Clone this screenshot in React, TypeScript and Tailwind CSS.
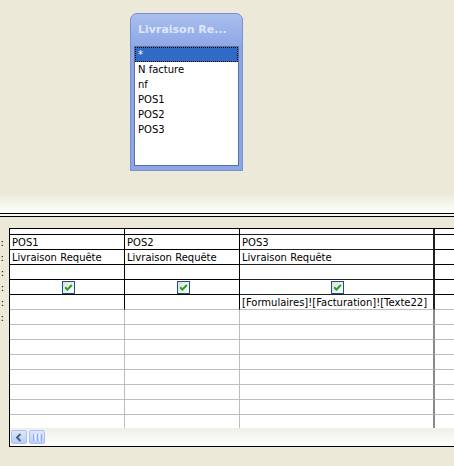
import React from "react";

const FONT = { fontFamily: '"DejaVu Sans", Verdana, sans-serif' };

function Check() {
  return (
    <svg width="13" height="13" viewBox="0 0 13 13">
      <defs>
        <linearGradient id="cbg" x1="0" y1="0" x2="1" y2="1">
          <stop offset="0" stopColor="#DCDCD7" />
          <stop offset="1" stopColor="#FFFFFF" />
        </linearGradient>
      </defs>
      <rect x="0.5" y="0.5" width="12" height="12" fill="url(#cbg)" stroke="#1C5180" />
      <path d="M3.2 6.2 L5.4 8.6 L9.8 4" fill="none" stroke="#21A121" strokeWidth="2" />
    </svg>
  );
}

function FieldList() {
  const items = ["N facture", "nf", "POS1", "POS2", "POS3"];
  return (
    <div className="w-[113px] h-[158px] rounded-t-[7px] border border-[#7690D8] bg-[#8CA6E5] flex flex-col overflow-hidden">
      <div className="h-[32px] flex items-center pl-[7px] bg-linear-to-b from-[#A9BEEE] to-[#8EA8E5]">
        <span className="text-[11px] font-bold text-[#DDE7F9] whitespace-nowrap" style={FONT}>
          Livraison Re...
        </span>
      </div>
      <div className="mx-[3px] mb-[4px] flex-1 bg-white border border-[#5B70A0] text-[10px] text-black" style={FONT}>
        <div className="h-[15px] flex items-center pl-[2px] bg-[#316AC5] text-white border border-dotted border-[#101010]">
          *
        </div>
        {items.map((t) => (
          <div key={t} className="h-[15px] flex items-center pl-[3px] whitespace-nowrap">
            {t}
          </div>
        ))}
      </div>
    </div>
  );
}

type Row = { kind: "upper" | "crit" | "lower" | "last"; cells: React.ReactNode[] };

function Cells({ row }: { row: Row }) {
  let c1 = "";
  let c3 = "";
  let c4 = "";
  if (row.kind === "upper") {
    c1 = "w-[115px] h-[15px] border-r border-b border-black flex items-center justify-start pl-[2px] whitespace-nowrap overflow-hidden";
    c3 = "w-[195px] h-[15px] border-r-2 border-b border-[#202020] flex items-center justify-start pl-[2px] whitespace-nowrap overflow-hidden";
    c4 = "flex-1 h-[15px] border-b border-black";
  } else if (row.kind === "crit") {
    c1 = "w-[115px] h-[15px] border-r border-black border-b border-b-[#BDBDBD] flex items-center pl-[2px] whitespace-nowrap overflow-hidden";
    c3 = "w-[195px] h-[15px] border-r-2 border-[#202020] border-b border-b-[#BDBDBD] flex items-center pl-[2px] whitespace-nowrap overflow-hidden";
    c4 = "flex-1 h-[15px] border-b border-[#BDBDBD]";
  } else if (row.kind === "lower") {
    c1 = "w-[115px] h-[15px] border-r border-b border-[#BDBDBD]";
    c3 = "w-[195px] h-[15px] border-r-2 border-r-[#8A8A8A] border-b border-b-[#BDBDBD]";
    c4 = "flex-1 h-[15px] border-b border-[#BDBDBD]";
  } else {
    c1 = "w-[115px] h-[13px] border-r border-[#BDBDBD]";
    c3 = "w-[195px] h-[13px] border-r-2 border-[#8A8A8A]";
    c4 = "flex-1 h-[13px]";
  }
  return (
    <div className="flex">
      <div className={c1}>{row.cells[0]}</div>
      <div className={c1}>{row.cells[1]}</div>
      <div className={c3}>{row.cells[2]}</div>
      <div className={c4} />
    </div>
  );
}

function CenterCheck() {
  return (
    <div className="w-full flex justify-center items-center">
      <Check />
    </div>
  );
}

export default function App() {
  const rows: Row[] = [
    { kind: "upper", cells: ["POS1", "POS2", "POS3"] },
    { kind: "upper", cells: ["Livraison Requête", "Livraison Requête", "Livraison Requête"] },
    { kind: "upper", cells: ["", "", ""] },
    { kind: "upper", cells: [<CenterCheck key="a" />, <CenterCheck key="b" />, <CenterCheck key="c" />] },
    { kind: "crit", cells: ["", "", "[Formulaires]![Facturation]![Texte22]"] },
  ];
  for (let i = 0; i < 7; i++) rows.push({ kind: "lower", cells: ["", "", ""] });
  rows.push({ kind: "last", cells: ["", "", ""] });

  const labels = ["Champ :", "Table :", "Tri :", "Afficher :", "Critères :", "Ou :"];

  return (
    <div className="w-[454px] h-[466px] bg-[#ECE9D8] flex flex-col overflow-hidden text-black" style={FONT}>
      <div className="h-[192px] shrink-0 pl-[130px] pt-[13px]">
        <FieldList />
      </div>
      <div className="h-[21px] shrink-0 bg-linear-to-b from-[#ECE9D8] to-[#FDFDFC]" />
      <div className="h-px shrink-0 bg-black" />
      <div className="h-[2px] shrink-0 bg-[#F7F6F2]" />
      <div className="h-px shrink-0 bg-black" />
      <div className="h-[11px] shrink-0 bg-[#ECE9D8]" />
      <div className="flex shrink-0">
        <div className="w-[9px] shrink-0 pt-[7px] overflow-hidden text-[10px]">
          {labels.map((l) => (
            <div key={l} className="h-[15px] flex items-center justify-end pr-[5px] whitespace-nowrap">
              {l}
            </div>
          ))}
        </div>
        <div className="flex-1 border-l border-t border-b border-black bg-white text-[10px] flex flex-col">
          <div className="flex">
            <div className="w-[115px] h-[6px] border-r border-b border-black" />
            <div className="w-[115px] h-[6px] border-r border-b border-black" />
            <div className="w-[195px] h-[6px] border-r-2 border-b border-[#202020]" />
            <div className="flex-1 h-[6px] border-b border-black" />
          </div>
          {rows.map((r, i) => (
            <Cells key={i} row={r} />
          ))}
          <div className="h-[18px] flex items-center pl-[1px] gap-[2px] bg-linear-to-b from-[#EFEEE8] to-[#FEFEFD]">
            <div className="w-[16px] h-[14px] rounded-[2px] border border-[#AFC3F2] bg-linear-to-b from-[#DCE6FD] to-[#BACDF9] flex items-center justify-center">
              <svg width="8" height="9" viewBox="0 0 8 9">
                <path d="M5.5 1 L2 4.5 L5.5 8" fill="none" stroke="#4D6185" strokeWidth="2" />
              </svg>
            </div>
            <div className="w-[16px] h-[14px] rounded-[2px] border border-[#AFC3F2] bg-linear-to-b from-[#DCE6FD] to-[#BACDF9] flex items-center justify-center gap-[1px]">
              <div className="w-px h-[7px] bg-[#8EAAF0]" />
              <div className="w-px h-[7px] bg-[#EEF3FE]" />
              <div className="w-px h-[7px] bg-[#8EAAF0]" />
              <div className="w-px h-[7px] bg-[#EEF3FE]" />
              <div className="w-px h-[7px] bg-[#8EAAF0]" />
            </div>
          </div>
        </div>
      </div>
    </div>
  );
}
